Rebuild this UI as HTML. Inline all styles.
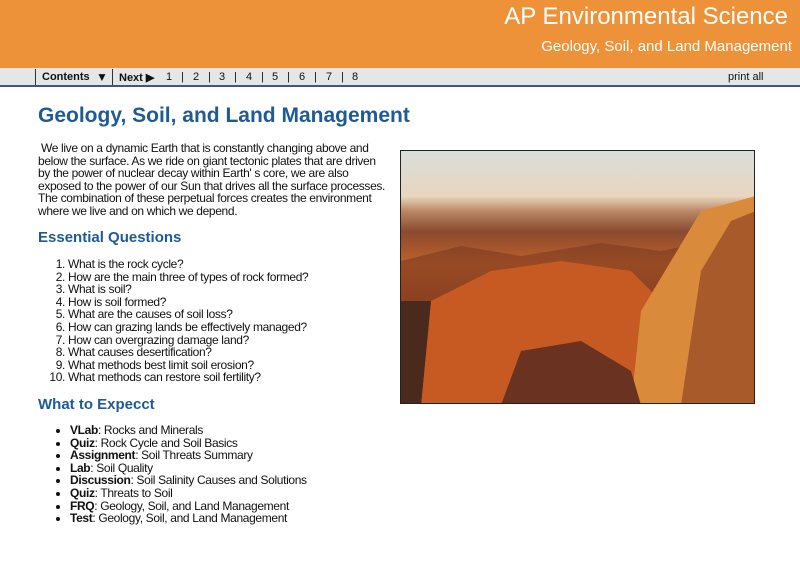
<!DOCTYPE html>
<html><head><meta charset="utf-8"><style>
*{margin:0;padding:0;box-sizing:border-box}
body{width:800px;height:588px;background:#fff;font-family:"Liberation Sans",Arial,sans-serif;color:#111;position:relative;overflow:hidden}
.hdr{position:absolute;left:0;top:0;width:800px;height:68px;background:#ee9239}
.t1{position:absolute;right:12px;top:3px;color:#fff;font-size:24px}
.t2{position:absolute;right:8px;top:38px;color:#fff;font-size:15px}
.nav{position:absolute;left:0;top:68px;width:800px;height:19px;background:#e6e6e6;border-bottom:2px solid #3a5a85;font-size:11px}
.nav span{position:absolute;top:3px}
h1{position:absolute;left:38px;top:104px;font-size:21px;color:#1e5a96;font-weight:bold}
h2{position:absolute;left:38px;font-size:15px;color:#1e5a96;font-weight:bold}
.p{position:absolute;left:38px;top:142px;width:362px;font-size:12px;line-height:12.6px;white-space:nowrap;letter-spacing:-0.35px}
ol,ul{position:absolute;font-size:12px;line-height:12.6px;letter-spacing:-0.35px;white-space:nowrap}
ol{left:56px;top:258px;padding-left:12px}
ul{left:58px;top:424px;padding-left:12px}
.img{position:absolute;left:400px;top:150px;width:355px;height:254px;border:1px solid #222;overflow:hidden;
background:linear-gradient(180deg,#d8dedd 0%,#e8d6bd 18%,#b98663 24%,#8a4a30 32%,#c06228 45%,#a54a1f 60%,#7a3d1d 75%,#5a3020 100%)}
</style></head><body>
<div class="hdr"><div class="t1">AP Environmental Science</div><div class="t2">Geology, Soil, and Land Management</div></div>
<div class="nav">
<div style="position:absolute;left:35px;top:1px;width:1px;height:16px;background:#333"></div>
<span style="left:42px;font-weight:bold">Contents</span><span style="left:96px;font-size:12px;top:2px">▼</span>
<div style="position:absolute;left:112px;top:1px;width:1px;height:16px;background:#333"></div>
<span style="left:119px;font-weight:bold">Next ▶</span>
<span style="left:166px">1</span><span style="left:181px">|</span>
<span style="left:193px">2</span><span style="left:208px">|</span>
<span style="left:219px">3</span><span style="left:234px">|</span>
<span style="left:246px">4</span><span style="left:261px">|</span>
<span style="left:272px">5</span><span style="left:287px">|</span>
<span style="left:299px">6</span><span style="left:314px">|</span>
<span style="left:326px">7</span><span style="left:341px">|</span>
<span style="left:352px">8</span>
<span style="left:728px">print all</span>
</div>
<h1>Geology, Soil, and Land Management</h1>
<div class="p">&nbsp;We live on a dynamic Earth that is constantly changing above and<br>below the surface. As we ride on giant tectonic plates that are driven<br>by the power of nuclear decay within Earth' s core, we are also<br>exposed to the power of our Sun that drives all the surface processes.<br>The combination of these perpetual forces creates the environment<br>where we live and on which we depend.</div>
<h2 style="top:229px">Essential Questions</h2>
<ol><li>What is the rock cycle?</li><li>How are the main three of types of rock formed?</li><li>What is soil?</li><li>How is soil formed?</li><li>What are the causes of soil loss?</li><li>How can grazing lands be effectively managed?</li><li>How can overgrazing damage land?</li><li>What causes desertification?</li><li>What methods best limit soil erosion?</li><li>What methods can restore soil fertility?</li></ol>
<h2 style="top:396px">What to Expecct</h2>
<ul><li><b>VLab</b>: Rocks and Minerals</li><li><b>Quiz</b>: Rock Cycle and Soil Basics</li><li><b>Assignment</b>: Soil Threats Summary</li><li><b>Lab</b>: Soil Quality</li><li><b>Discussion</b>: Soil Salinity Causes and Solutions</li><li><b>Quiz</b>: Threats to Soil</li><li><b>FRQ</b>: Geology, Soil, and Land Management</li><li><b>Test</b>: Geology, Soil, and Land Management</li></ul>
<div class="img">
<svg width="355" height="254" style="position:absolute;left:0;top:0">
<polygon points="0,110 60,95 120,105 200,92 260,100 355,80 355,254 0,254" fill="#7b3a22" opacity=".6"/>
<polygon points="20,254 30,150 90,120 160,110 230,120 260,150 300,200 310,254" fill="#c65a22"/>
<polygon points="230,254 240,160 270,110 300,60 355,45 355,254" fill="#d98a3a"/>
<polygon points="280,254 300,120 330,70 355,60 355,254" fill="#a85a2a"/>
<polygon points="0,150 30,150 20,254 0,254" fill="#4a2a1c"/>
<polygon points="100,254 120,200 180,190 230,220 240,254" fill="#6a3220"/>
</svg>
</div>
</body></html>
